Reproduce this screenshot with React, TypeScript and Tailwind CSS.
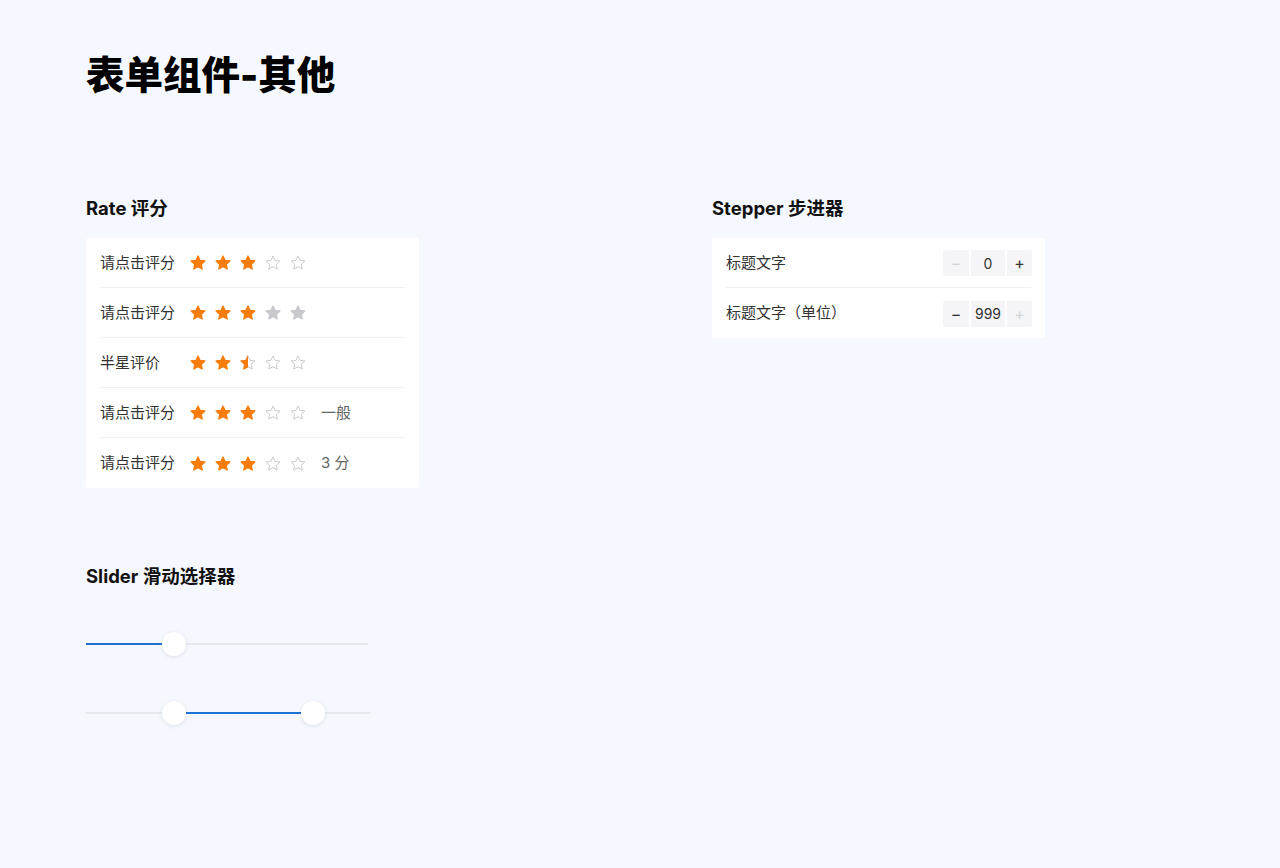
import React from "react";

const FONT = { fontFamily: '"Inter", "Noto Sans CJK SC", sans-serif' };

const STAR_PATH =
  "M12 2.6l2.75 5.9 6.45.78-4.76 4.43 1.23 6.39L12 16.93l-5.67 3.17 1.23-6.39L2.8 9.28l6.45-.78z";

type StarKind = "full" | "half" | "empty" | "gray";

function Star({ kind, id }: { kind: StarKind; id: string }) {
  const orange = "#f77c0a";
  const gray = "#c8c9cc";
  return (
    <svg width="18" height="18" viewBox="0 0 24 24" className="shrink-0">
      {kind === "full" && (
        <path d={STAR_PATH} fill={orange} stroke={orange} strokeWidth="1.6" strokeLinejoin="round" />
      )}
      {kind === "gray" && (
        <path d={STAR_PATH} fill={gray} stroke={gray} strokeWidth="1.6" strokeLinejoin="round" />
      )}
      {kind === "empty" && (
        <path d={STAR_PATH} fill="none" stroke={gray} strokeWidth="1.3" strokeLinejoin="round" />
      )}
      {kind === "half" && (
        <>
          <defs>
            <clipPath id={id}>
              <rect x="0" y="0" width="12" height="24" />
            </clipPath>
          </defs>
          <path d={STAR_PATH} fill="none" stroke={gray} strokeWidth="1.3" strokeLinejoin="round" />
          <path
            d={STAR_PATH}
            fill={orange}
            stroke={orange}
            strokeWidth="1.6"
            strokeLinejoin="round"
            clipPath={`url(#${id})`}
          />
        </>
      )}
    </svg>
  );
}

const RATE_ROWS: { label: string; stars: StarKind[]; suffix?: string }[] = [
  { label: "请点击评分", stars: ["full", "full", "full", "empty", "empty"] },
  { label: "请点击评分", stars: ["full", "full", "full", "gray", "gray"] },
  { label: "半星评价", stars: ["full", "full", "half", "empty", "empty"] },
  { label: "请点击评分", stars: ["full", "full", "full", "empty", "empty"], suffix: "一般" },
  { label: "请点击评分", stars: ["full", "full", "full", "empty", "empty"], suffix: "3 分" },
];

function SectionTitle({ children }: { children: React.ReactNode }) {
  return <h2 className="text-[18.5px] leading-[24px] font-bold text-[#111]">{children}</h2>;
}

function Row({ children, last }: { children: React.ReactNode; last?: boolean }) {
  return (
    <div className="px-[14px]">
      <div
        className={
          "flex h-[50px] items-center pt-px text-[15px] text-[#323233] " +
          (last ? "" : "border-b border-[#eef0f3]")
        }
      >
        {children}
      </div>
    </div>
  );
}

function RateCard() {
  return (
    <div className="w-[333px] rounded-[3px] bg-white">
      {RATE_ROWS.map((row, i) => (
        <Row key={i} last={i === RATE_ROWS.length - 1}>
          <span className="w-[89px] shrink-0">{row.label}</span>
          <div className="flex items-center gap-[7px]">
            {row.stars.map((s, j) => (
              <Star key={j} kind={s} id={`half-${i}-${j}`} />
            ))}
          </div>
          {row.suffix && <span className="ml-[14px] text-[#646566]">{row.suffix}</span>}
        </Row>
      ))}
    </div>
  );
}

function Stepper({ value, minDisabled, plusDisabled }: { value: number; minDisabled?: boolean; plusDisabled?: boolean }) {
  return (
    <div className="ml-auto mr-[-1px] flex items-center gap-[2px]">
      <div
        className={
          "flex h-[26px] w-[26px] items-center justify-center rounded-l-[3px] bg-[#f5f5f7] text-[16px] " +
          (minDisabled ? "text-[#d4d5d8]" : "text-[#323233]")
        }
      >
        −
      </div>
      <div className="flex h-[26px] w-[34px] items-center justify-center bg-[#f5f5f7] text-[14px] text-[#323233]">
        {value}
      </div>
      <div
        className={
          "flex h-[26px] w-[25px] items-center justify-center rounded-r-[3px] bg-[#f5f5f7] text-[16px] " +
          (plusDisabled ? "text-[#d4d5d8]" : "text-[#323233]")
        }
      >
        +
      </div>
    </div>
  );
}

function StepperCard() {
  return (
    <div className="w-[333px] rounded-[3px] bg-white">
      <Row>
        <span>标题文字</span>
        <Stepper value={0} minDisabled />
      </Row>
      <Row last>
        <span>标题文字（单位）</span>
        <Stepper value={999} plusDisabled />
      </Row>
    </div>
  );
}

function Slider({ from, to, thumbs, width }: { from: number; to: number; thumbs: number[]; width: number }) {
  return (
    <div className="relative h-[24px]" style={{ width }}>
      <div className="absolute left-0 right-0 top-[11px] h-[2px] bg-[#e6e8ec]" />
      <div className="absolute top-[11px] h-[2px] bg-[#1f74d3]" style={{ left: from, width: to - from }} />
      {thumbs.map((t, i) => (
        <div
          key={i}
          className="absolute top-0 h-[24px] w-[24px] rounded-full bg-white shadow-[0_1px_4px_rgba(0,0,0,0.1)]"
          style={{ left: t - 12 }}
        />
      ))}
    </div>
  );
}

export default function App() {
  return (
    <div className="min-h-[868px] w-full bg-[#f5f8fe] pl-[86px] pt-[52px]" style={FONT}>
      <h1 className="text-[38.5px] leading-[46px] font-black text-black">表单组件-其他</h1>

      <div className="mt-[98px] flex">
        <div className="w-[626px]">
          <SectionTitle>Rate 评分</SectionTitle>
          <div className="mt-[18px]">
            <RateCard />
          </div>

          <div className="mt-[76px]">
            <SectionTitle>Slider 滑动选择器</SectionTitle>
          </div>
          <div className="mt-[44px]">
            <Slider width={282} from={0} to={88} thumbs={[88]} />
          </div>
          <div className="mt-[45px]">
            <Slider width={284} from={88} to={227} thumbs={[88, 227]} />
          </div>
        </div>

        <div className="w-[333px]">
          <SectionTitle>Stepper 步进器</SectionTitle>
          <div className="mt-[18px]">
            <StepperCard />
          </div>
        </div>
      </div>
    </div>
  );
}
